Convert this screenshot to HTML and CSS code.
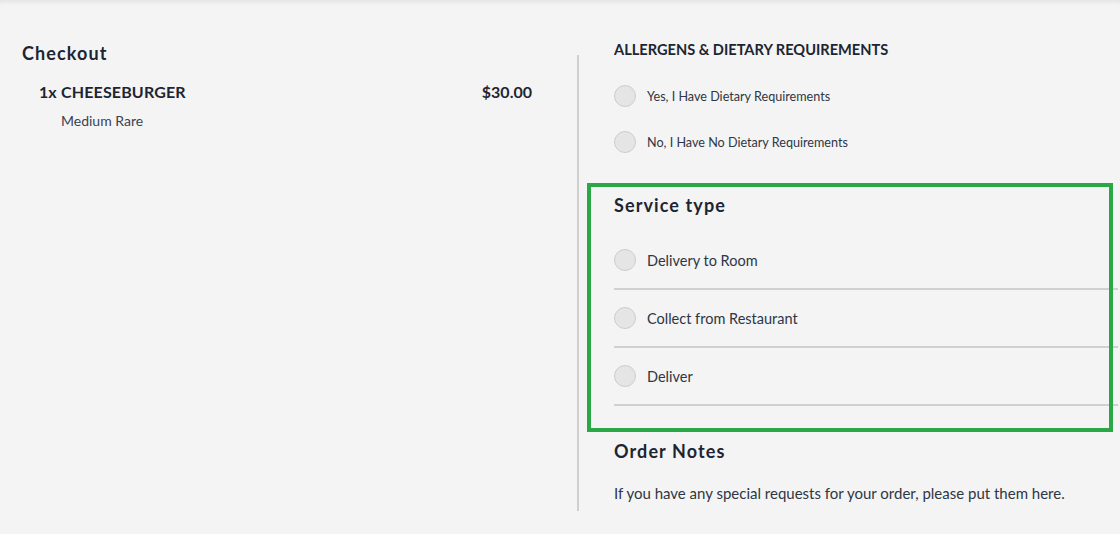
FILE: index.html
```html
<!DOCTYPE html>
<html lang="en">
<head>
<meta charset="utf-8">
<title>Checkout</title>
<link rel="stylesheet" href="styles.css">
</head>
<body>
<div class="page">
  <section class="left">
    <h2 class="title">Checkout</h2>
    <div class="item">
      <div class="item-row">
        <span class="qty">1x</span>
        <span class="name">CHEESEBURGER</span>
        <span class="price">$30.00</span>
      </div>
      <div class="modifier">Medium Rare</div>
    </div>
  </section>
  <div class="divider"></div>
  <section class="right">
    <h3 class="allergen-title">ALLERGENS &amp; DIETARY REQUIREMENTS</h3>
    <div class="allergen-options">
      <label class="radio-line"><span class="radio"></span><span class="small-label">Yes, I Have Dietary Requirements</span></label>
      <label class="radio-line"><span class="radio"></span><span class="small-label">No, I Have No Dietary Requirements</span></label>
    </div>
    <div class="service">
      <h2 class="title service-title">Service type</h2>
      <div class="service-options">
        <label class="service-row"><span class="radio"></span><span class="label">Delivery to Room</span></label>
        <label class="service-row"><span class="radio"></span><span class="label">Collect from Restaurant</span></label>
        <label class="service-row"><span class="radio"></span><span class="label">Deliver</span></label>
      </div>
      <div class="highlight"></div>
    </div>
    <h2 class="title notes-title">Order Notes</h2>
    <p class="notes-text">If you have any special requests for your order, please put them here.</p>
  </section>
</div>
</body>
</html>
```
FILE: styles.css
```css
* { box-sizing: border-box; }
html, body { margin: 0; padding: 0; }
body {
  background: #f4f4f4;
  font-family: Lato, "Liberation Sans", Arial, sans-serif;
  color: #1d2532;
  width: 1120px;
  height: 534px;
  overflow: hidden;
  box-shadow: inset 0 5px 5px -3px rgba(0,0,0,0.07);
}
.page {
  display: flex;
  align-items: flex-start;
}
.left {
  width: 577px;
  padding: 41px 45px 0 22px;
}
.title {
  margin: 0;
  font-size: 18px;
  font-weight: 700;
  letter-spacing: 1.1px;
  line-height: 24px;
  color: #1d2532;
}
.item {
  padding: 16px 0 0 17px;
}
.item-row {
  display: flex;
  align-items: center;
  font-size: 16px;
  font-weight: 700;
  line-height: 22px;
}
.qty { width: 22px; }
.name { flex: 1; letter-spacing: 0.15px; }
.price { text-align: right; }
.modifier {
  margin-top: 9px;
  padding-left: 22px;
  font-size: 14px;
  line-height: 18px;
  color: #3b4250;
}
.divider {
  width: 2px;
  height: 456px;
  margin-top: 55px;
  background: #cfcfcf;
}
.right {
  flex: 1;
  padding: 41px 2px 0 35px;
}
.allergen-title {
  margin: 0;
  font-size: 14.6px;
  font-weight: 700;
  line-height: 18px;
  color: #1d2532;
}
.allergen-options {
  display: flex;
  flex-direction: column;
  gap: 24px;
  padding-top: 26px;
}
.radio-line {
  display: flex;
  align-items: center;
  gap: 11px;
  height: 22px;
}
.radio {
  flex: none;
  width: 22px;
  height: 22px;
  border-radius: 50%;
  background: #e5e5e5;
  border: 1px solid #cdcdcd;
}
.small-label {
  font-size: 12.6px;
  color: #2f3644;
}
.service {
  position: relative;
  margin-top: 40px;
}
.service-options {
  padding-top: 15px;
}
.service-row {
  display: flex;
  align-items: center;
  gap: 11px;
  height: 58px;
  border-bottom: 2px solid #d0d0d0;
}
.label {
  font-size: 14.5px;
  color: #2f3644;
}
.highlight {
  position: absolute;
  left: -27px;
  top: -10px;
  width: 526px;
  height: 249px;
  border: 4px solid #2aa845;
  pointer-events: none;
}
.notes-title {
  margin-top: 33px;
}
.notes-text {
  margin: 20px 0 0;
  font-size: 15px;
  line-height: 20px;
  color: #2f3644;
}
```
